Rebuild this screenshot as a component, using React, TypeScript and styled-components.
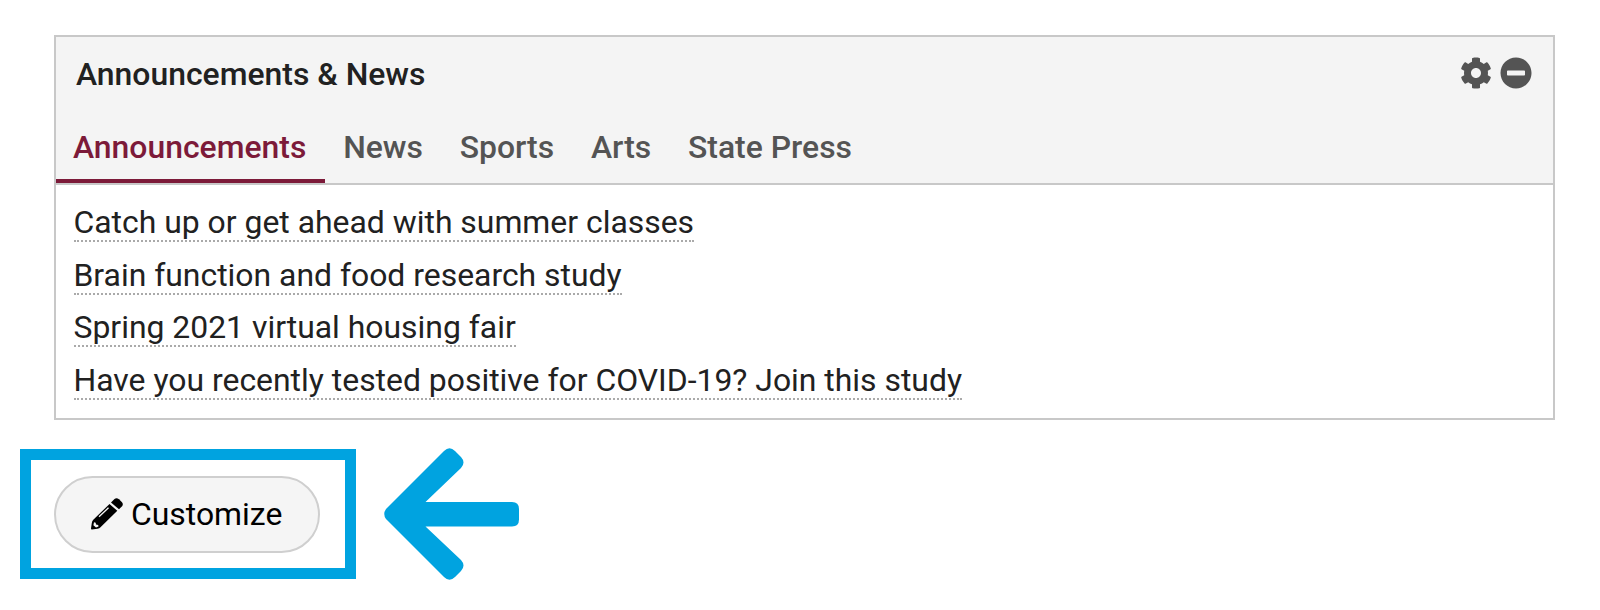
import React from "react";
import styled, { createGlobalStyle } from "styled-components";
import { FaCog, FaMinusCircle } from "react-icons/fa";

const Global = createGlobalStyle`
  * { box-sizing: border-box; }
  body { margin: 0; background: #fff; font-family: Roboto, sans-serif; color: #212121; overflow: hidden; }
`;
const Page = styled.main`
  height: 610px;
  padding: 35px 45px 0 20px;
`;
const Panel = styled.section`
  height: 385px;
  margin-left: 34px;
  border: 2px solid #c8c8c8;
`;
const PanelHead = styled.header`
  height: 148px;
  background: #f4f4f4;
  border-bottom: 2px solid #c8c8c8;
`;
const TitleRow = styled.div`
  height: 73px;
  padding: 0 21px 0 20px;
  display: flex;
  align-items: center;
  justify-content: space-between;
`;
const Title = styled.h2`
  margin: 0;
  font-size: 31.9px;
  font-weight: 500;
  line-height: 40px;
`;
const Actions = styled.div`
  display: flex;
  gap: 8px;
  padding-bottom: 1px;
  color: #545454;
`;
const Tabs = styled.nav`
  display: flex;
  height: 73px;
`;
const Tab = styled.a<{ $active?: boolean }>`
  padding: 17px 18.8px 0 ${(p) => (p.$active ? "17px" : "18px")};
  font-size: 31.9px;
  font-weight: 500;
  line-height: 40px;
  color: ${(p) => (p.$active ? "#7c1a39" : "#545454")};
  box-shadow: inset 0 -4px ${(p) => (p.$active ? "#7c1a39" : "transparent")};
`;
const List = styled.ul`
  margin: 0;
  padding: 16px 17px;
  list-style: none;
`;
const Item = styled.li`
  height: 52.5px;
`;
const Story = styled.a`
  display: inline-block;
  height: 41px;
  margin-left: 0.5px;
  font-size: 31.9px;
  line-height: 42px;
  border-bottom: 2px dotted #aaa;
`;
const Footer = styled.div`
  display: flex;
  align-items: center;
  gap: 28px;
  margin-top: 27px;
`;
const Highlight = styled.div`
  width: 336px;
  height: 130px;
  padding: 16px 0 0 23px;
  border: 11px solid #00a3e0;
`;
const Button = styled.button`
  display: flex;
  align-items: center;
  gap: 8px;
  width: 266px;
  height: 77px;
  padding: 0 0 2px 35px;
  border: 2px solid #cfcfcf;
  border-radius: 39px;
  background: #f5f5f5;
  color: #000;
  font: 400 31.9px Roboto, sans-serif;
`;
const stories = [
  "Catch up or get ahead with summer classes",
  "Brain function and food research study",
  "Spring 2021 virtual housing fair",
  "Have you recently tested positive for COVID-19? Join this study",
];

const PencilIcon = () => (
  <svg width="32" height="32" viewBox="0 0 32 32" fill="currentColor">
    <path d="M20 4.500 L23.500 1 Q25.500 -0.500 28 1.200 L31 4.200 Q32.500 6.200 31.300 8 L28 11.300 Z" />
    <path d="M18.500 6 L26.300 12.800 L9.500 29.200 Q8.500 30.500 6.500 30.800 L0.800 31.600 Q0 31.600 0 30.600 L0.800 25 Q1 23 2.300 21.800 Z" />
    <path d="M3 24.300 L4.700 24.800 L5 26.600 L7.200 27 L7.500 28.600 L5 29.400 L2.400 27.200 Z" fill="#f5f5f5" />
    <path d="M8 18.800 L17.500 9.800" fill="none" stroke="#f5f5f5" strokeWidth="1.300" />
  </svg>
);

export default function App() {
  return (
    <Page>
      <Global />
      <Panel>
        <PanelHead>
          <TitleRow>
            <Title>Announcements &amp; News</Title>
            <Actions>
              <FaCog size={32} />
              <FaMinusCircle size={32} />
            </Actions>
          </TitleRow>
          <Tabs>
            {["Announcements", "News", "Sports", "Arts", "State Press"].map((t, i) => (
              <Tab key={t} $active={i === 0}>{t}</Tab>
            ))}
          </Tabs>
        </PanelHead>
        <List>
          {stories.map((s) => (
            <Item key={s}><Story>{s}</Story></Item>
          ))}
        </List>
      </Panel>
      <Footer>
        <Highlight>
          <Button><PencilIcon />Customize</Button>
        </Highlight>
        <svg width="135" height="134" viewBox="0 0 135 134" fill="#00a3e0">
          <path d="M2 62 L60 4 Q65.500 -1.500 71 4 L77 10 Q82 15.500 77 21 L41.500 55 H128 Q135 55 135 62 V72.500 Q135 79.500 128 79.500 H41.500 L77 113 Q82 118.500 77 124 L71 130 Q65.500 135.500 60 130 L2 72 Q-1.500 67 2 62 Z" />
        </svg>
      </Footer>
    </Page>
  );
}
